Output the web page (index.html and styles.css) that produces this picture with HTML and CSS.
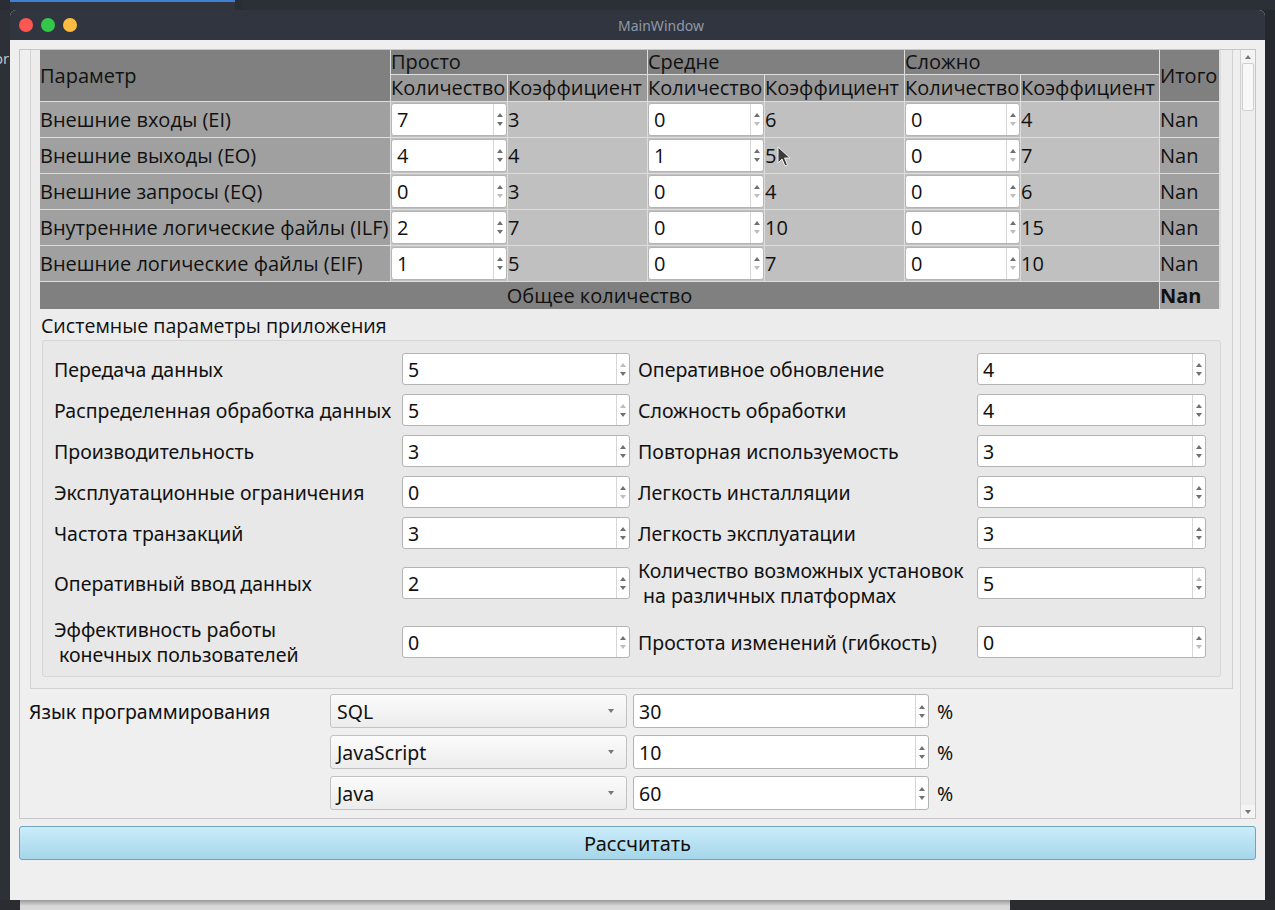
FILE: index.html
```html
<!DOCTYPE html>
<html lang="ru">
<head>
<meta charset="utf-8">
<title>MainWindow</title>
<link rel="stylesheet" href="styles.css">
</head>
<body>
<div class="desk-top">
  <div class="dt-blue"></div>
  <div class="dt-gap"></div>
  <div class="dt-dark"></div>
</div>
<div class="desk-row">
  <div class="desk-left"><span class="dl-text">or</span></div>
  <div class="window">
    <div class="titlebar">
      <div class="lights"><span class="light red"></span><span class="light green"></span><span class="light yellow"></span></div>
      <div class="title">MainWindow</div>
    </div>
    <div class="client">
      <div class="scrollarea">
        <div class="viewport">
          <div class="frame">
            <div class="fp-table">
              <div class="c hd hd-param">Параметр</div>
              <div class="c hd span2">Просто</div>
              <div class="c hd span2">Средне</div>
              <div class="c hd span2">Сложно</div>
              <div class="c hd hd-total">Итого</div>
              <div class="c hd2">Количество</div>
              <div class="c hd2">Коэффициент</div>
              <div class="c hd2">Количество</div>
              <div class="c hd2">Коэффициент</div>
              <div class="c hd2">Количество</div>
              <div class="c hd2">Коэффициент</div>

              <div class="c lbl">Внешние входы (EI)</div>
              <div class="c sc"><div class="spin"><span class="val">7</span><span class="arrows"><i class="up"></i><i class="dn"></i></span></div></div>
              <div class="c coef">3</div>
              <div class="c sc"><div class="spin"><span class="val">0</span><span class="arrows"><i class="up"></i><i class="dn off"></i></span></div></div>
              <div class="c coef">6</div>
              <div class="c sc"><div class="spin"><span class="val">0</span><span class="arrows"><i class="up"></i><i class="dn off"></i></span></div></div>
              <div class="c coef">4</div>
              <div class="c tot">Nan</div>

              <div class="c lbl">Внешние выходы (EO)</div>
              <div class="c sc"><div class="spin"><span class="val">4</span><span class="arrows"><i class="up"></i><i class="dn"></i></span></div></div>
              <div class="c coef">4</div>
              <div class="c sc"><div class="spin"><span class="val">1</span><span class="arrows"><i class="up"></i><i class="dn"></i></span></div></div>
              <div class="c coef">5</div>
              <div class="c sc"><div class="spin"><span class="val">0</span><span class="arrows"><i class="up"></i><i class="dn off"></i></span></div></div>
              <div class="c coef">7</div>
              <div class="c tot">Nan</div>

              <div class="c lbl">Внешние запросы (EQ)</div>
              <div class="c sc"><div class="spin"><span class="val">0</span><span class="arrows"><i class="up"></i><i class="dn off"></i></span></div></div>
              <div class="c coef">3</div>
              <div class="c sc"><div class="spin"><span class="val">0</span><span class="arrows"><i class="up"></i><i class="dn off"></i></span></div></div>
              <div class="c coef">4</div>
              <div class="c sc"><div class="spin"><span class="val">0</span><span class="arrows"><i class="up"></i><i class="dn off"></i></span></div></div>
              <div class="c coef">6</div>
              <div class="c tot">Nan</div>

              <div class="c lbl">Внутренние логические файлы (ILF)</div>
              <div class="c sc"><div class="spin"><span class="val">2</span><span class="arrows"><i class="up"></i><i class="dn"></i></span></div></div>
              <div class="c coef">7</div>
              <div class="c sc"><div class="spin"><span class="val">0</span><span class="arrows"><i class="up"></i><i class="dn off"></i></span></div></div>
              <div class="c coef">10</div>
              <div class="c sc"><div class="spin"><span class="val">0</span><span class="arrows"><i class="up"></i><i class="dn off"></i></span></div></div>
              <div class="c coef">15</div>
              <div class="c tot">Nan</div>

              <div class="c lbl">Внешние логические файлы (EIF)</div>
              <div class="c sc"><div class="spin"><span class="val">1</span><span class="arrows"><i class="up"></i><i class="dn"></i></span></div></div>
              <div class="c coef">5</div>
              <div class="c sc"><div class="spin"><span class="val">0</span><span class="arrows"><i class="up"></i><i class="dn off"></i></span></div></div>
              <div class="c coef">7</div>
              <div class="c sc"><div class="spin"><span class="val">0</span><span class="arrows"><i class="up"></i><i class="dn off"></i></span></div></div>
              <div class="c coef">10</div>
              <div class="c tot">Nan</div>

              <div class="c sum-lbl">Общее количество</div>
              <div class="c tot bold">Nan</div>
            </div>

            <div class="sys-title">Системные параметры приложения</div>

            <div class="group">
              <div class="g-lbl">Передача данных</div>
              <div class="spin g"><span class="val">5</span><span class="arrows"><i class="up off"></i><i class="dn"></i></span></div>
              <div class="g-lbl r">Оперативное обновление</div>
              <div class="spin g"><span class="val">4</span><span class="arrows"><i class="up"></i><i class="dn"></i></span></div>

              <div class="g-lbl">Распределенная обработка данных</div>
              <div class="spin g"><span class="val">5</span><span class="arrows"><i class="up off"></i><i class="dn"></i></span></div>
              <div class="g-lbl r">Сложность обработки</div>
              <div class="spin g"><span class="val">4</span><span class="arrows"><i class="up"></i><i class="dn"></i></span></div>

              <div class="g-lbl">Производительность</div>
              <div class="spin g"><span class="val">3</span><span class="arrows"><i class="up"></i><i class="dn"></i></span></div>
              <div class="g-lbl r">Повторная используемость</div>
              <div class="spin g"><span class="val">3</span><span class="arrows"><i class="up"></i><i class="dn"></i></span></div>

              <div class="g-lbl">Эксплуатационные ограничения</div>
              <div class="spin g"><span class="val">0</span><span class="arrows"><i class="up"></i><i class="dn off"></i></span></div>
              <div class="g-lbl r">Легкость инсталляции</div>
              <div class="spin g"><span class="val">3</span><span class="arrows"><i class="up"></i><i class="dn"></i></span></div>

              <div class="g-lbl">Частота транзакций</div>
              <div class="spin g"><span class="val">3</span><span class="arrows"><i class="up"></i><i class="dn"></i></span></div>
              <div class="g-lbl r">Легкость эксплуатации</div>
              <div class="spin g"><span class="val">3</span><span class="arrows"><i class="up"></i><i class="dn"></i></span></div>

              <div class="g-lbl">Оперативный ввод данных</div>
              <div class="spin g"><span class="val">2</span><span class="arrows"><i class="up"></i><i class="dn"></i></span></div>
              <div class="g-lbl r">Количество возможных установок<br>&nbsp;на различных платформах</div>
              <div class="spin g"><span class="val">5</span><span class="arrows"><i class="up off"></i><i class="dn"></i></span></div>

              <div class="g-lbl">Эффективность работы<br>&nbsp;конечных пользователей</div>
              <div class="spin g"><span class="val">0</span><span class="arrows"><i class="up"></i><i class="dn off"></i></span></div>
              <div class="g-lbl r">Простота изменений (гибкость)</div>
              <div class="spin g"><span class="val">0</span><span class="arrows"><i class="up"></i><i class="dn off"></i></span></div>
            </div>
          </div>

          <div class="lang">
            <div class="lang-lbl">Язык программирования</div>
            <div class="combo"><span class="val">SQL</span><i class="cb-arrow"></i></div>
            <div class="spin l"><span class="val">30</span><span class="arrows"><i class="up"></i><i class="dn"></i></span></div>
            <div class="pct">%</div>

            <div class="combo c2"><span class="val">JavaScript</span><i class="cb-arrow"></i></div>
            <div class="spin l"><span class="val">10</span><span class="arrows"><i class="up"></i><i class="dn"></i></span></div>
            <div class="pct">%</div>

            <div class="combo c2"><span class="val">Java</span><i class="cb-arrow"></i></div>
            <div class="spin l"><span class="val">60</span><span class="arrows"><i class="up"></i><i class="dn"></i></span></div>
            <div class="pct">%</div>
          </div>
        </div>
        <div class="vscroll">
          <div class="sb-btn"><i class="sb-up"></i></div>
          <div class="sb-track"><div class="sb-handle"></div></div>
          <div class="sb-btn"><i class="sb-dn"></i></div>
        </div>
      </div>
      <button class="calc">Рассчитать</button>
    </div>
  </div>
  <div class="desk-right"></div>
</div>
<div class="desk-bottom"><div class="behind"></div></div>

<svg class="cursor" width="14" height="22" viewBox="0 0 14 22"><path d="M1 1 L1 17 L5 13 L8 20 L10.5 19 L7.5 12 L13 12 Z" fill="#3a3a3a" stroke="#f0f0f0" stroke-width="1"/></svg>
</body>
</html>
```
FILE: styles.css
```css
* { box-sizing: border-box; }
html, body { margin: 0; padding: 0; }
body {
  width: 1275px;
  height: 910px;
  overflow: hidden;
  background: #26292e;
  font-family: "Open Sans", "Noto Sans", sans-serif;
  color: #111;
  position: relative;
}

/* desktop behind */
.desk-top { height: 10px; display: flex; background: #2a2d33; }
.dt-blue { width: 225px; margin-left: 10px; background: #30343c; border-top: 2px solid #3f7fd6; }
.dt-gap { width: 8px; }
.dt-dark { flex: 1; background: #2b2f36; }

.desk-row { display: flex; height: 890px; }
.desk-left { width: 10px; background: #2d3036; overflow: hidden; padding-top: 38px; }
.dl-text { display: block; color: #c8c8c8; font-size: 15px; margin-left: -6px; }
.desk-right { width: 10px; background: #25282d; }
.desk-bottom { height: 10px; background: #2a2c30; padding-left: 20px; }
.behind { width: 990px; height: 10px; background: linear-gradient(#9a9a9a, #d8d8d8 60%); }

/* window */
.window { width: 1255px; height: 890px; display: flex; flex-direction: column; background: #efefef; border-radius: 6px 6px 0 0; overflow: hidden; }
.titlebar { height: 30px; background: #30353f; display: flex; align-items: center; flex: none; }
.lights { display: flex; gap: 8px; padding-left: 9px; }
.light { width: 14px; height: 14px; border-radius: 50%; display: block; }
.light.red { background: #fc5753; }
.light.green { background: #34c84a; }
.light.yellow { background: #fdbc40; }
.title { flex: 1; text-align: center; color: #8f99a8; font-size: 14px; margin-right: 20px; font-family: "Noto Sans", sans-serif; }

.client { flex: 1; padding: 9px 9px 0 9px; display: flex; flex-direction: column; }

.scrollarea { height: 770px; border: 1px solid #c6c6c6; display: flex; background: #efefef; }
.viewport { flex: 1; overflow: hidden; padding: 0 7px 0 10px; }

.frame { border: 1px solid #d2d2d2; border-top: none; background: #ececec; padding: 0 11px 11px 10px; }

/* function point table */
.fp-table {
  display: grid;
  grid-template-columns: 350px 116px 139px 116px 139px 115px 138px 59px;
  grid-template-rows: 24px 26px repeat(5, 35px) 27px;
  gap: 1px;
  background: #dedede;
  font-size: 20px;
  margin-left: -1px;
}
.c { display: flex; align-items: center; white-space: nowrap; line-height: 1; }
.hd { background: #808080; }
.hd-param { grid-row: 1 / 3; }
.span2 { grid-column: span 2; }
.hd-total { grid-row: 1 / 3; grid-column: 8; }
.hd2 { background: #999999; }
.lbl { background: #a0a0a0; }
.coef { background: #c0c0c0; }
.sc { background: #c0c0c0; padding: 1px 0; align-items: stretch; }
.tot { background: #a0a0a0; }
.bold { font-weight: 700; }
.sum-lbl { grid-column: 1 / 8; background: #808080; justify-content: center; }

/* spin box */
.spin { display: flex; flex: 1; background: #fff; border: 1px solid #b4b4b4; border-radius: 3px; align-items: stretch; }
.spin .val { flex: 1; display: flex; align-items: center; padding-left: 5px; }
.arrows { width: 13px; border-left: 1px solid #d6d6d6; display: flex; flex-direction: column; justify-content: center; align-items: center; gap: 5px; }
.arrows i, .sb-btn i { display: block; width: 0; height: 0; border-left: 3px solid transparent; border-right: 3px solid transparent; }
.arrows .up { border-bottom: 4px solid #707070; }
.arrows .dn { border-top: 4px solid #707070; }
.arrows .off.up { border-bottom-color: #bdbdbd; }
.arrows .off.dn { border-top-color: #bdbdbd; }

.sys-title { font-size: 19.6px; height: 31px; line-height: 30px; padding-top: 2px; }

.group {
  margin-left: 1px;
  border: 1px solid #d6d6d6;
  border-radius: 3px;
  background: #e8e8e8;
  padding: 12px 12px 9px 11px;
  display: grid;
  grid-template-columns: 343px 228px 337px 229px;
  column-gap: 5px;
  row-gap: 9px;
  align-items: center;
  font-size: 19.5px;
  font-family: "Noto Sans", sans-serif;
}
.g-lbl { line-height: 25px; white-space: nowrap; }
.g-lbl.r { padding-left: 3px; }
.spin.g { height: 32px; }

/* language */
.lang {
  display: grid;
  grid-template-columns: 301px 303px 303px auto;
  row-gap: 7px;
  padding: 5px 0 0 0;
  margin-left: -1px;
  font-family: "Noto Sans", sans-serif;
  font-size: 19.5px;
  align-items: center;
}
.lang-lbl { grid-row: 1; }
.combo { height: 34px; display: flex; align-items: center; border: 1px solid #c2c2c2; border-radius: 3px; background: linear-gradient(#fbfbfb, #ececec); padding: 0 12px 0 6px; margin-right: 6px; }
.combo.c2 { grid-column: 2; }
.combo .val { flex: 1; }
.cb-arrow { display: block; width: 0; height: 0; border-left: 3px solid transparent; border-right: 3px solid transparent; border-top: 4px solid #777; }
.spin.l { height: 34px; margin-right: 7px; }
.pct { padding-left: 1px; }

/* scroll bar */
.vscroll { width: 15px; border-left: 1px solid #d2d2d2; background: #f4f4f4; display: flex; flex-direction: column; }
.sb-btn { height: 13px; display: flex; align-items: center; justify-content: center; }
.sb-up { border-bottom: 4px solid #777; }
.sb-dn { border-top: 4px solid #777; }
.sb-track { flex: 1; padding: 0 1px; background: #ededed; }
.sb-handle { height: 48px; background: #f8f8f8; border: 1px solid #d0d0d0; border-radius: 2px; }

.calc {
  margin-top: 7px;
  height: 34px;
  border: 1px solid #6fa4bd;
  border-radius: 3px;
  background: linear-gradient(#cbecfa, #a5d6ea);
  font-family: "Noto Sans", sans-serif;
  font-size: 20px;
  color: #111;
  padding: 0;
}

.cursor { position: absolute; left: 777px; top: 146px; }
```
